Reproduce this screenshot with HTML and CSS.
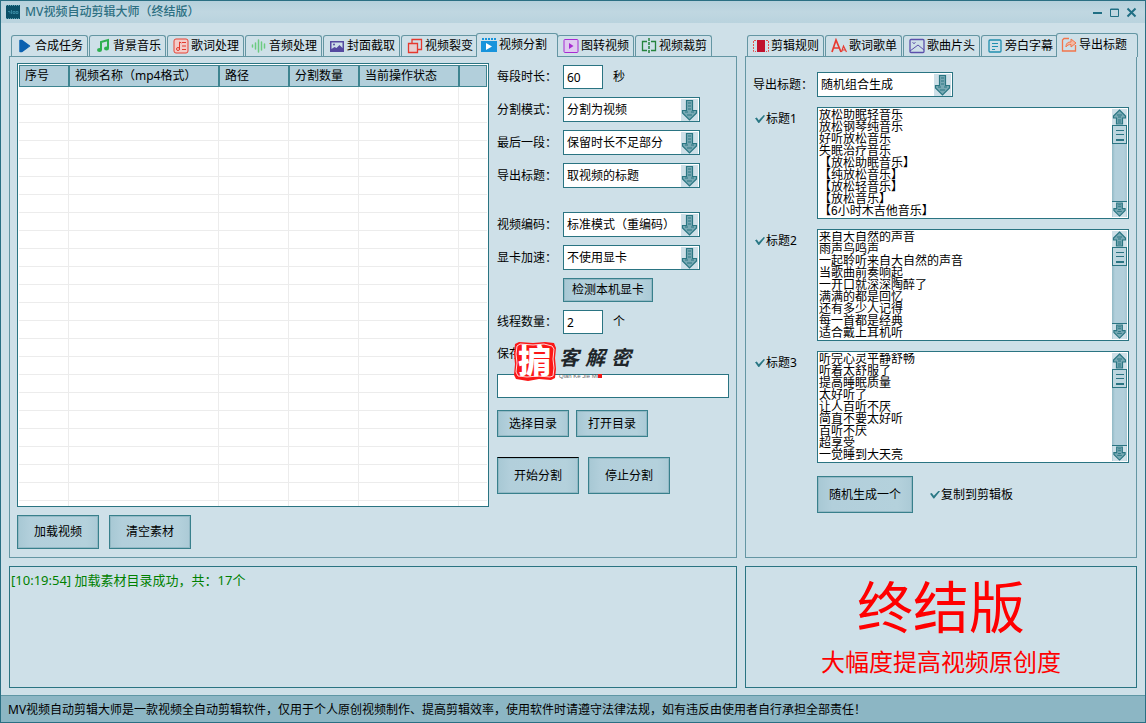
FILE: index.html
```
<!DOCTYPE html>
<html lang="zh-CN">
<head>
<meta charset="utf-8">
<title>MV视频自动剪辑大师（终结版）</title>
<link rel="stylesheet" href="styles.css">
</head>
<body>
<svg class="defs" aria-hidden="true">
  <symbol id="down" viewBox="0 0 17 22">
    <path fill="#cee0e8" d="M0 0h17v22H0z"/>
    <path fill="#78a9b4" stroke="#2a7682" stroke-width="1.200" d="M5.500 1.500h6v10h4v2.500l-7 7-7-7v-2.500h4z"/>
    <path fill="none" stroke="#2a7682" d="M7 4h3M7 7h3M7 10h3M4 13h3M10 13h3M6 16h5"/>
  </symbol>
  <symbol id="up-small" viewBox="0 0 15 16">
    <path fill="#cee0e8" d="M0 0h15v16H0z"/>
    <path fill="#78a9b4" stroke="#2a7682" stroke-width="1.200" d="M7.500 1l6 6v2h-3v6h-6V9h-3V7z"/>
    <path fill="none" stroke="#2a7682" d="M5 6h5M6 8h3M6 11h3M6 13h3"/>
  </symbol>
  <symbol id="down-small" viewBox="0 0 15 16">
    <path fill="#cee0e8" d="M0 0h15v16H0z"/>
    <path fill="#78a9b4" stroke="#2a7682" stroke-width="1.200" d="M7.500 15l6-6V7h-3V1h-6v6h-3v2z"/>
    <path fill="none" stroke="#2a7682" d="M5 10h5M6 8h3M6 5h3M6 3h3"/>
  </symbol>
</svg>

<header class="titlebar">
  <svg class="app-icon" viewBox="0 0 14 14"><path fill="#0b5068" d="M0 0h14v14H0z"/><path stroke="#5aa0b2" stroke-dasharray="1 1" d="M0 .5h14M0 13.500h14"/><path fill="none" stroke="#3587a0" d="M2 6.500h2v2M5.500 5v4M7 6.500h2v2H7zM10 6.500h2v2h-2z"/></svg>
  <h1>MV视频自动剪辑大师（终结版）</h1>
  <div class="window-buttons">
    <button aria-label="最小化"><svg viewBox="0 0 11 11"><path d="M1 6h9"/></svg></button>
    <button aria-label="最大化"><svg viewBox="0 0 11 11"><path d="M1.500 2h8v7.500h-8zM1 2.500h9" stroke-width="1"/></svg></button>
    <button aria-label="关闭"><svg viewBox="0 0 11 11"><path d="M1.500 1.500l8 8M9.500 1.500l-8 8"/></svg></button>
  </div>
</header>

<main class="workspace">
  <section class="tabbed">
    <div class="tabs" role="tablist">
      <button class="tab" role="tab"><svg viewBox="0 0 16 16"><path fill="#0b61b0" stroke="#0b61b0" stroke-width="1.500" stroke-linejoin="round" d="M3 2.500h2L12.500 8 5 13.500H3z"/></svg>合成任务</button>
      <button class="tab" role="tab"><svg viewBox="0 0 16 16"><path fill="none" stroke="#2eaf50" stroke-width="2" d="M6 12V4l7-2v8"/><ellipse cx="4.500" cy="12" rx="2.500" ry="2" fill="#2eaf50"/><ellipse cx="11.500" cy="10.500" rx="2.500" ry="2" fill="#2eaf50"/></svg>背景音乐</button>
      <button class="tab" role="tab"><svg viewBox="0 0 16 16"><rect x="1" y="1" width="14" height="14" rx="2" fill="#f3ccc9" stroke="#e74335"/><path fill="none" stroke="#e33b2e" d="M6.500 11.500V4L8.500 5M9 4.500h4M9 8h4M9 11.500h4"/><circle cx="5" cy="11" r="1.500" fill="none" stroke="#e33b2e"/></svg>歌词处理</button>
      <button class="tab" role="tab"><svg viewBox="0 0 16 16"><path stroke="#6ccb80" stroke-width="1.500" stroke-linecap="round" d="M1.500 7v2M4.500 5v6M7.500 2v12M10.500 4v8M13.500 6v4"/></svg>音频处理</button>
      <button class="tab" role="tab"><svg viewBox="0 0 16 16"><rect x="1" y="3" width="14" height="11" fill="#5549a0"/><path fill="#cee0e8" d="M2.500 4.500h11V10l-3-3-3 3-2-1-3 2z"/><circle cx="5" cy="6.500" r="1" fill="#5549a0"/></svg>封面截取</button>
      <button class="tab" role="tab"><svg viewBox="0 0 16 16"><path fill="#e6cfd0" stroke="#e5392e" stroke-width="1.300" d="M1.500 5.500h9v9h-9z"/><path fill="none" stroke="#e5392e" stroke-width="1.300" d="M5 5V1.500h9.500v10h-4"/></svg>视频裂变</button>
      <button class="tab active" role="tab" aria-selected="true"><svg viewBox="0 0 16 16"><path fill="#1794dc" d="M0 4h16v11H0z"/><path stroke="#1794dc" stroke-width="2" stroke-dasharray="2 1" d="M1 2h15"/><path fill="#fff" d="M5 6v7l6-3.500z"/></svg>视频分割</button>
      <button class="tab" role="tab"><svg viewBox="0 0 16 16"><rect x="1" y="1.500" width="14" height="13" rx="1" fill="#dfcaf0" stroke="#a82bd2"/><path fill="#a82bd2" d="M6 5v6l4.500-3z"/></svg>图转视频</button>
      <button class="tab" role="tab"><svg viewBox="0 0 16 16"><path fill="none" stroke="#25833c" stroke-width="1.300" d="M6 3.500H1.500v9H6M10 3.500h4.500v9H10"/><path stroke="#25833c" stroke-width="1.500" stroke-dasharray="3 1" d="M8 0v16"/></svg>视频裁剪</button>
    </div>
    <div class="panel split-panel">
      <div class="files">
        <div class="table-box">
          <table>
            <colgroup><col class="c-num"><col class="c-name"><col class="c-path"><col class="c-count"><col class="c-state"><col></colgroup>
            <thead><tr><th>序号</th><th>视频名称（mp4格式）</th><th>路径</th><th>分割数量</th><th>当前操作状态</th><th></th></tr></thead>
            <tbody>
              <tr><td><td><td><td><td><td>
              <tr><td><td><td><td><td><td>
              <tr><td><td><td><td><td><td>
              <tr><td><td><td><td><td><td>
              <tr><td><td><td><td><td><td>
              <tr><td><td><td><td><td><td>
              <tr><td><td><td><td><td><td>
              <tr><td><td><td><td><td><td>
              <tr><td><td><td><td><td><td>
              <tr><td><td><td><td><td><td>
              <tr><td><td><td><td><td><td>
              <tr><td><td><td><td><td><td>
              <tr><td><td><td><td><td><td>
              <tr><td><td><td><td><td><td>
              <tr><td><td><td><td><td><td>
              <tr><td><td><td><td><td><td>
              <tr><td><td><td><td><td><td>
              <tr><td><td><td><td><td><td>
              <tr><td><td><td><td><td><td>
              <tr><td><td><td><td><td><td>
              <tr><td><td><td><td><td><td>
              <tr><td><td><td><td><td><td>
              <tr><td><td><td><td><td><td>
              <tr><td><td><td><td><td><td>
            </tbody>
          </table>
        </div>
        <div class="file-actions">
          <button class="btn">加载视频</button>
          <button class="btn">清空素材</button>
        </div>
      </div>
      <form class="settings">
        <div class="field"><label for="len">每段时长：</label><input class="box short" id="len" value="60"><span class="unit">秒</span></div>
        <div class="field"><label for="mode">分割模式：</label><span class="combo"><select id="mode"><option>分割为视频</option></select><svg><use href="#down"/></svg></span></div>
        <div class="field"><label for="last">最后一段：</label><span class="combo"><select id="last"><option>保留时长不足部分</option></select><svg><use href="#down"/></svg></span></div>
        <div class="field"><label for="title">导出标题：</label><span class="combo"><select id="title"><option>取视频的标题</option></select><svg><use href="#down"/></svg></span></div>
        <div class="field group"><label for="codec">视频编码：</label><span class="combo"><select id="codec"><option>标准模式（重编码）</option></select><svg><use href="#down"/></svg></span></div>
        <div class="field"><label for="gpu">显卡加速：</label><span class="combo"><select id="gpu"><option>不使用显卡</option></select><svg><use href="#down"/></svg></span></div>
        <div class="field indent"><button type="button" class="btn detect">检测本机显卡</button></div>
        <div class="field"><label for="threads">线程数量：</label><input class="box short" id="threads" value="2"><span class="unit">个</span></div>
        <div class="field save-label"><label for="dir">保存</label>
          <svg class="stamp" viewBox="0 0 124 40" role="img" aria-label="掮客解密">
            <path fill="#fb1717" d="M2 3l4-2 14 1 12-1 9 1 2 5-1 10 1 11-1 9-4 2-12-1-11 2-12-2-2-4 1-11-1-10z"/>
            <path fill="none" stroke="#ffd9d9" d="M4 5l3-2 13 1 11-1 8 2 2 3-1 10 1 9-1 8-3 1-12-1-11 1-9-1-2-4 1-9-1-9z"/>
            <text class="seal" x="5" y="32">掮</text>
            <text class="brush" x="46" y="24">客</text>
            <text class="brush" x="72" y="24">解</text>
            <text class="brush" x="98" y="24">密</text>
            <text class="pinyin" x="46" y="37">Qian Ke Jie Mi</text>
            <path fill="#f01818" d="M85 33h4v4h-4z"/>
          </svg>
        </div>
        <input class="box" id="dir" value="">
        <div class="pair"><button type="button" class="btn">选择目录</button><button type="button" class="btn">打开目录</button></div>
        <div class="pair large"><button type="button" class="btn focus">开始分割</button><button type="button" class="btn">停止分割</button></div>
      </form>
    </div>
  </section>

  <section class="tabbed">
    <div class="tabs" role="tablist">
      <button class="tab" role="tab"><svg viewBox="0 0 16 16"><path fill="#c0102c" d="M4 2h8v12H4z"/><path fill="none" stroke="#e2504f" stroke-dasharray="2 1" d="M3 2.500H.5v11H3M13 2.500h2.500v11H13"/></svg>剪辑规则</button>
      <button class="tab" role="tab"><svg viewBox="0 0 16 16"><path fill="none" stroke="#e83a30" stroke-width="1.700" d="M1 14L5 2l5 12M2.500 10h6"/><path fill="none" stroke="#e83a30" stroke-width="1.200" d="M10.500 14l2-6 3 6M11 12h4"/></svg>歌词歌单</button>
      <button class="tab" role="tab"><svg viewBox="0 0 16 16"><rect x="1" y="1.500" width="14" height="13" rx="1" fill="none" stroke="#5b50ab" stroke-width="1.300"/><path fill="none" stroke="#5b50ab" d="M1 13l8-6 6 5"/><path fill="none" stroke="#5b50ab" d="M3.500 4.500l1.500 1 1.500-1"/></svg>歌曲片头</button>
      <button class="tab" role="tab"><svg viewBox="0 0 16 16"><rect x="2" y="2" width="12" height="12" rx="1" fill="none" stroke="#208fae" stroke-width="1.300"/><path stroke="#208fae" d="M5 5.500h6M5 8.500h6M5 11.500h3"/></svg>旁白字幕</button>
      <button class="tab active" role="tab" aria-selected="true"><svg viewBox="0 0 16 16"><path fill="none" stroke="#f2754b" stroke-width="1.300" d="M8 1.500H3L1.500 3v11h13V8"/><path fill="#f3b9a3" stroke="#f2754b" d="M5 10c0-4 2-5 5-5V2l5 4-5 4V7.500c-2 0-4 .5-5 2.500z"/></svg>导出标题</button>
    </div>
    <div class="panel export-panel">
      <div class="row middle"><label for="etitle">导出标题：</label><span class="combo"><select id="etitle"><option>随机组合生成</option></select><svg><use href="#down"/></svg></span></div>
      <div class="row">
        <label class="check"><input type="checkbox" checked>标题1</label>
        <div class="memo"><textarea aria-label="标题1">放松助眠轻音乐
放松钢琴纯音乐
好听放松音乐
失眠治疗音乐
【放松助眠音乐】
【纯放松音乐】
【放松轻音乐】
【放松音乐】
【6小时木吉他音乐】</textarea><div class="scroll"><svg><use href="#up-small"/></svg><i class="thumb"></i><svg class="end"><use href="#down-small"/></svg></div></div>
      </div>
      <div class="row">
        <label class="check"><input type="checkbox" checked>标题2</label>
        <div class="memo"><textarea aria-label="标题2">来自大自然的声音
雨声鸟鸣声
一起聆听来自大自然的声音
当歌曲前奏响起
一开口就深深陶醉了
满满的都是回忆
还有多少人记得
每一首都是经典
适合戴上耳机听</textarea><div class="scroll"><svg><use href="#up-small"/></svg><i class="thumb"></i><svg class="end"><use href="#down-small"/></svg></div></div>
      </div>
      <div class="row">
        <label class="check"><input type="checkbox" checked>标题3</label>
        <div class="memo"><textarea aria-label="标题3">听完心灵平静舒畅
听着太舒服了
提高睡眠质量
太好听了
让人百听不厌
简直不要太好听
百听不厌
超享受
一觉睡到大天亮</textarea><div class="scroll"><svg><use href="#up-small"/></svg><i class="thumb"></i><svg class="end"><use href="#down-small"/></svg></div></div>
      </div>
      <div class="generate">
        <button class="btn">随机生成一个</button>
        <label class="check"><input type="checkbox" checked>复制到剪辑板</label>
      </div>
    </div>
  </section>

  <section class="log">[10:19:54] 加载素材目录成功，共：17个</section>
  <section class="promo"><p class="edition">终结版</p><p class="slogan">大幅度提高视频原创度</p></section>
</main>

<footer class="status">MV视频自动剪辑大师是一款视频全自动剪辑软件，仅用于个人原创视频制作、提高剪辑效率，使用软件时请遵守法律法规，如有违反由使用者自行承担全部责任！</footer>
</body>
</html>
```
FILE: styles.css
```
* { box-sizing: border-box; }

:root {
  --line: #2a7482;
  --soft-line: #6496a3;
  --bg: #cee0e8;
  --face: #b2cfdb;
}

body {
  margin: 0;
  min-height: 100vh;
  display: flex;
  flex-direction: column;
  border: 1px solid #2a6f83;
  background: var(--bg);
  color: #000;
  font: 12px/16px "Noto Sans", "Noto Sans CJK SC", sans-serif;
}

button, input, select, textarea { font: inherit; color: inherit; margin: 0; padding: 0; border: 0; border-radius: 0; outline: 0; }
p, h1 { margin: 0; }
.defs { display: none; }

.titlebar {
  display: flex;
  align-items: center;
  gap: 5px;
  height: 22px;
  padding: 0 8px 0 5px;
  background: linear-gradient(#b5d0dc, #c0d7e1 50%, #b9d3de);
  color: #2c6f82;
}
.titlebar h1 { flex: 1; font-size: 12px; font-weight: 500; }
.app-icon { width: 14px; height: 14px; }
.window-buttons { display: flex; gap: 6px; }
.window-buttons button { width: 11px; height: 11px; background: none; }
.window-buttons svg { display: block; width: 11px; height: 11px; fill: none; stroke: #206f84; stroke-width: 2; }

.workspace {
  flex: 1;
  display: grid;
  grid-template-columns: 728fr 392fr;
  grid-template-rows: 1fr 122px;
  gap: 8px;
  padding: 10px 8px 7px;
}
.tabbed { display: flex; flex-direction: column; min-width: 0; }

.tabs { display: flex; align-items: flex-end; gap: 1px; height: 23px; padding-left: 2px; }
.tab {
  display: flex;
  align-items: center;
  gap: 2px;
  width: 77px;
  height: 21px;
  padding-left: 5px;
  border: 1px solid var(--soft-line);
  border-bottom: 0;
  border-radius: 3px 3px 0 0;
  background: var(--bg);
  white-space: nowrap;
}
.tab svg { flex: none; width: 16px; height: 16px; }
.tab.active { position: relative; width: 82px; height: 24px; margin: 0 -2px -1px -3px; padding: 0 0 1px 4px; }

.panel { flex: 1; border: 1px solid var(--soft-line); }

.split-panel { display: flex; gap: 8px; padding: 6px 7px 8px; }
.files { flex: 1; display: flex; flex-direction: column; gap: 8px; }
.table-box { flex: 1; min-height: 400px; contain: size; overflow: hidden; padding: 1px; border: 1px solid var(--line); background: #fff; }
table { width: 100%; border-collapse: separate; border-spacing: 0; table-layout: fixed; }
.c-num { width: 50px; }
.c-name { width: 150px; }
.c-path, .c-count { width: 70px; }
.c-state { width: 100px; }
th {
  height: 22px;
  padding: 0 0 0 5px;
  border: 1px solid #3e8490;
  background: var(--face);
  font-weight: 400;
  text-align: left;
  white-space: nowrap;
}
td { height: 18px; padding: 0; border-right: 1px solid #ececec; border-bottom: 1px solid #ececec; }
td:last-child { border-right: 0; }

.btn {
  height: 27px;
  border: 1px solid #38808c;
  background: linear-gradient(90deg, #a7c8d4, var(--face) 15%, #b4d1dc 85%, #abcad6);
  box-shadow: inset 0 0 0 1px #93b9c5;
  white-space: nowrap;
}
.file-actions { display: flex; gap: 10px; }
.file-actions .btn { width: 82px; height: 34px; }

.settings { width: 232px; display: flex; flex-direction: column; gap: 8px; padding-top: 2px; }
.field { display: flex; align-items: center; }
.field > label { width: 66px; white-space: nowrap; }
.group { margin-top: 16px; }
.indent { padding-left: 66px; }
.box { height: 24px; padding: 0 3px; border: 1px solid var(--line); background: #fff; }
.short { width: 40px; }
.unit { padding-left: 10px; }
.combo { display: flex; align-items: center; width: 137px; height: 25px; padding-right: 1px; border: 1px solid var(--line); background: #fff; }
.combo select { flex: 1; min-width: 0; height: 23px; padding-left: 3px; appearance: none; background: none; }
.combo svg { flex: none; width: 17px; height: 22px; }
.detect { width: 90px; height: 24px; }
.pair { display: flex; gap: 7px; padding-top: 4px; }
.pair .btn { width: 72px; }
.pair.large { gap: 9px; padding-top: 12px; }
.pair.large .btn { width: 82px; height: 37px; }
.pair .focus { border-top-color: #000; }

.save-label { position: relative; height: 24px; }
.stamp { position: absolute; left: 16px; top: -1px; width: 124px; height: 40px; }
.seal { font: 900 33px "Noto Sans CJK SC", sans-serif; fill: #fff; }
.brush { font: italic 700 20px "Noto Sans CJK SC", sans-serif; fill: #20262a; }
.pinyin { font: 6px "Liberation Sans", sans-serif; fill: #666; }

.export-panel { display: flex; flex-direction: column; gap: 10px; padding: 15px 7px 8px; }
.row { display: flex; align-items: flex-start; }
.row > label { width: 64px; flex: none; white-space: nowrap; }
.row.middle { align-items: center; }
.export-panel .combo { width: 136px; }
.check { display: flex; align-items: center; gap: 1px; }
.row > .check { padding: 4px 0 0 2px; }
.check input { width: 10px; height: 8px; appearance: none; }
.check input:checked { background: #2a7885; clip-path: polygon(0 40%, 18% 30%, 38% 65%, 88% 0, 100% 10%, 42% 100%, 34% 100%); }
.memo { flex: 1; display: flex; height: 112px; padding: 1px; border: 1px solid var(--line); background: #fff; }
.memo textarea { flex: 1; min-width: 0; resize: none; overflow: hidden; background: none; font: 12px/12px "Liberation Sans", "Noto Sans CJK SC", sans-serif; }
.scroll { display: flex; flex-direction: column; width: 15px; background: linear-gradient(90deg, #91b9c5, var(--face) 20% 80%, #a5c6d2); }
.scroll svg { width: 15px; height: 16px; }
.thumb {
  height: 19px;
  border: 1px solid var(--line);
  background:
    linear-gradient(#2a7482, #2a7482) 50% 4px / 8px 1px no-repeat,
    linear-gradient(#2a7482, #2a7482) 50% 8px / 8px 1px no-repeat,
    linear-gradient(#2a7482, #2a7482) 50% 13px / 8px 2px no-repeat,
    #bdd6df;
}
.scroll .end { margin-top: auto; border-top: 1px solid var(--line); }
.generate { display: flex; align-items: center; gap: 17px; padding: 3px 0 0 64px; }
.generate .btn { width: 96px; height: 37px; }

.log, .promo { border: 1px solid var(--line); }
.log { padding: 4px 1px; color: #008000; font-size: 13px; line-height: 18px; }
.promo { display: flex; flex-direction: column; align-items: center; padding-top: 3px; color: #f00; font-family: "Noto Sans CJK SC", sans-serif; }
.edition { font-size: 56px; line-height: 68px; }
.slogan { padding-top: 4px; font-size: 24px; line-height: 38px; }

.status { height: 27px; padding: 0 7px; border-top: 1px solid #5f97a5; background: #8cb6c4; line-height: 28px; white-space: nowrap; }
```
